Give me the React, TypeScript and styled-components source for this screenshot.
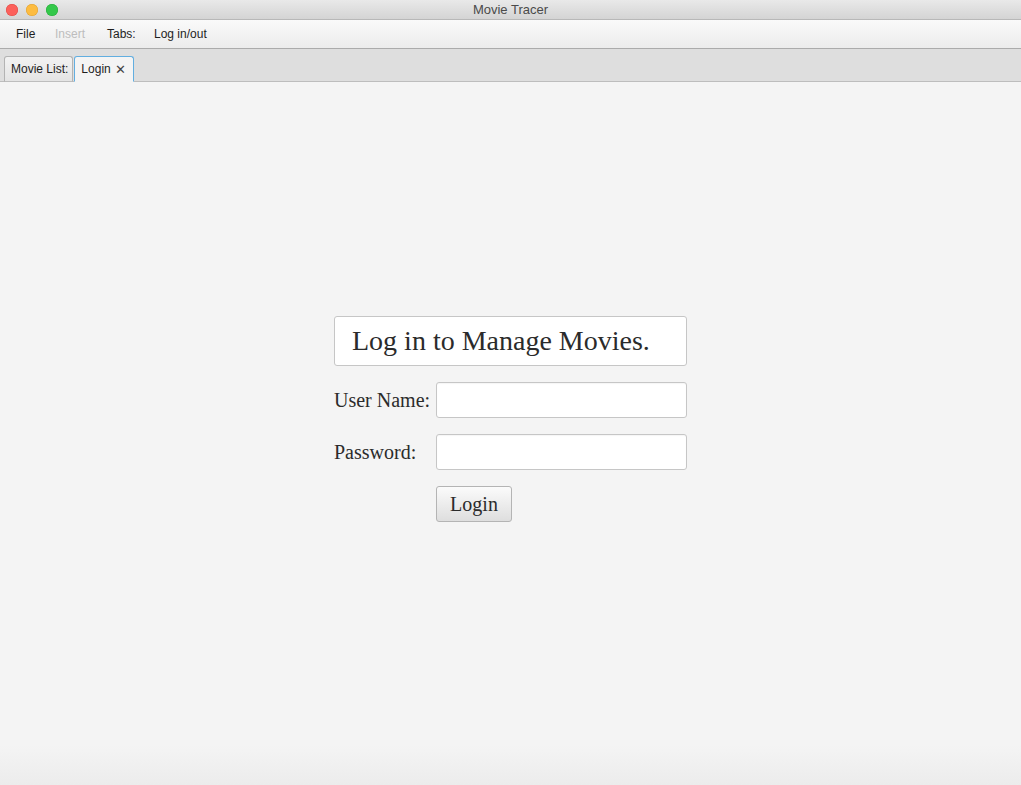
import React from "react";
import styled, { createGlobalStyle } from "styled-components";

const Global = createGlobalStyle`
  html, body { margin: 0; padding: 0; height: 100%; }
  body { background: #f4f4f4; }
  #root { height: 100%; }
`;

const Window = styled.div`
  width: 1021px;
  height: 785px;
  display: flex;
  flex-direction: column;
  background: #f4f4f4;
  overflow: hidden;
`;

const TitleBar = styled.div`
  height: 19px;
  flex: none;
  display: flex;
  align-items: center;
  position: relative;
  background: linear-gradient(#e9e9e9, #d4d4d4);
  border-bottom: 1px solid #b8b8b8;
  box-sizing: content-box;
`;

const Lights = styled.div`
  display: flex;
  gap: 8px;
  padding-left: 6px;
`;

const Light = styled.span<{ $c: string; $b: string }>`
  width: 12px;
  height: 12px;
  border-radius: 50%;
  background: ${(p) => p.$c};
  box-shadow: inset 0 0 0 0.5px ${(p) => p.$b};
`;

const Title = styled.div`
  position: absolute;
  left: 0;
  right: 0;
  top: 0;
  height: 19px;
  line-height: 19px;
  text-align: center;
  font-family: "Liberation Sans", Arial, sans-serif;
  font-size: 13px;
  color: #4a4a4a;
  pointer-events: none;
`;

const MenuBar = styled.div`
  height: 28px;
  flex: none;
  display: flex;
  align-items: center;
  padding-left: 16px;
  background: linear-gradient(#fafafa, #ececec);
  border-bottom: 1px solid #ababab;
  box-sizing: content-box;
`;

const MenuItem = styled.span<{ $disabled?: boolean; $w: number }>`
  width: ${(p) => p.$w}px;
  font-family: "Liberation Sans", Arial, sans-serif;
  font-size: 12px;
  color: ${(p) => (p.$disabled ? "#bdbdbd" : "#1e1e1e")};
  white-space: nowrap;
`;

const TabStrip = styled.div`
  height: 32px;
  flex: none;
  display: flex;
  align-items: flex-end;
  padding-left: 4px;
  gap: 1px;
  background: #dedede;
  border-bottom: 1px solid #bdbdbd;
  box-sizing: content-box;
`;

const Tab = styled.div<{ $active?: boolean }>`
  height: 26px;
  box-sizing: border-box;
  display: flex;
  align-items: center;
  gap: 4px;
  padding: ${(p) => (p.$active ? "0 7px 0 6px" : "0 4px 0 6px")};
  margin-bottom: -1px;
  border: 1px solid ${(p) => (p.$active ? "#62aee0" : "#b3b3b3")};
  border-bottom: ${(p) => (p.$active ? "1px solid #f4f4f4" : "1px solid #bdbdbd")};
  border-radius: 3px 3px 0 0;
  background: ${(p) => (p.$active ? "#f4f4f4" : "linear-gradient(#f2f2f2, #e4e4e4)")};
  font-family: "Liberation Sans", Arial, sans-serif;
  font-size: 12px;
  color: #1e1e1e;
  white-space: nowrap;
`;

const Close = styled.span`
  font-size: 13px;
  color: #444;
  line-height: 1;
`;

const Content = styled.div`
  flex: 1;
  display: flex;
  justify-content: center;
  align-items: flex-start;
  padding-top: 234px;
  background: linear-gradient(to bottom, #f4f4f4 0, #f4f4f4 calc(100% - 40px), #ececec 100%);
`;

const Form = styled.div`
  display: grid;
  grid-template-columns: 96px 251px;
  column-gap: 6px;
  row-gap: 16px;
  font-family: "Liberation Serif", "Times New Roman", serif;
  color: #2b2b2b;
`;

const Heading = styled.div`
  grid-column: 1 / span 2;
  height: 50px;
  box-sizing: border-box;
  display: flex;
  align-items: center;
  padding-left: 17px;
  padding-bottom: 1px;
  background: #fff;
  border: 1px solid #c6c6c6;
  border-radius: 3px;
  font-size: 28px;
`;

const Label = styled.label`
  font-size: 20px;
  display: flex;
  align-items: center;
  white-space: nowrap;
`;

const Input = styled.input`
  height: 36px;
  box-sizing: border-box;
  border: 1px solid #c6c6c6;
  border-radius: 3px;
  background: #fff;
  box-shadow: inset 0 1px 1px rgba(0, 0, 0, 0.04);
  outline: none;
  margin: 0;
  padding: 0 6px;
`;

const Button = styled.button`
  grid-column: 2;
  justify-self: start;
  width: 76px;
  height: 36px;
  box-sizing: border-box;
  border: 1px solid #b4b4b4;
  border-radius: 3px;
  background: linear-gradient(#fbfbfb, #dedede);
  font-family: "Liberation Serif", "Times New Roman", serif;
  font-size: 20px;
  color: #2b2b2b;
  padding: 0;
  margin: 0;
`;

export default function App() {
  return (
    <>
      <Global />
      <Window>
        <TitleBar>
          <Lights>
            <Light $c="#fc605b" $b="#de4a45" />
            <Light $c="#fdbc40" $b="#dea032" />
            <Light $c="#34c84a" $b="#27a93a" />
          </Lights>
          <Title>Movie Tracer</Title>
        </TitleBar>
        <MenuBar>
          <MenuItem $w={39}>File</MenuItem>
          <MenuItem $w={52} $disabled>Insert</MenuItem>
          <MenuItem $w={47}>Tabs:</MenuItem>
          <MenuItem $w={70}>Log in/out</MenuItem>
        </MenuBar>
        <TabStrip>
          <Tab>Movie List:</Tab>
          <Tab $active>
            Login <Close>✕</Close>
          </Tab>
        </TabStrip>
        <Content>
          <Form>
            <Heading>Log in to Manage Movies.</Heading>
            <Label>User Name:</Label>
            <Input type="text" />
            <Label>Password:</Label>
            <Input type="password" />
            <Button>Login</Button>
          </Form>
        </Content>
      </Window>
    </>
  );
}
